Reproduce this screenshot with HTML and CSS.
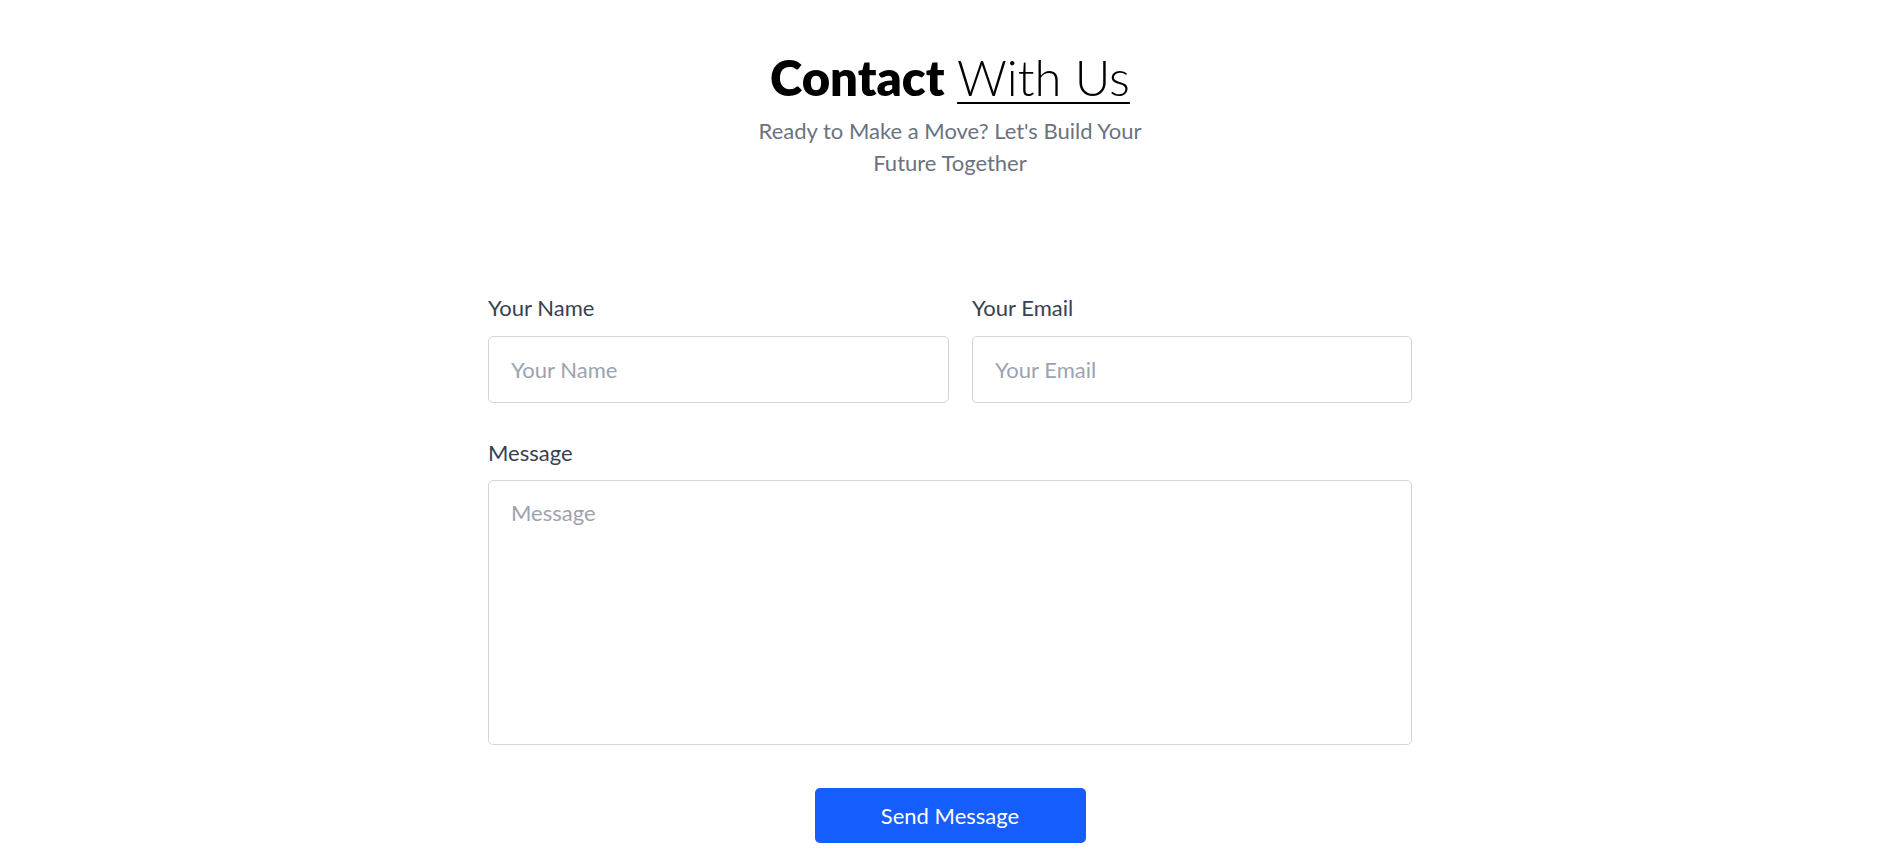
FILE: index.html
```html
<!DOCTYPE html>
<html lang="en">
<head>
<meta charset="utf-8">
<title>Contact With Us</title>
<link rel="stylesheet" href="styles.css">
</head>
<body>
<section class="contact">
  <header class="contact-head">
    <h1 class="title"><span class="title-bold">Contact</span> <span class="title-light">With Us</span></h1>
    <p class="subtitle">Ready to Make a Move? Let's Build Your Future Together</p>
  </header>
  <form class="form">
    <div class="row">
      <div class="field">
        <label class="label" for="name">Your Name</label>
        <input class="input" id="name" type="text" placeholder="Your Name">
      </div>
      <div class="field">
        <label class="label" for="email">Your Email</label>
        <input class="input" id="email" type="email" placeholder="Your Email">
      </div>
    </div>
    <div class="field field-msg">
      <label class="label" for="msg">Message</label>
      <textarea class="input textarea" id="msg" placeholder="Message"></textarea>
    </div>
    <div class="actions">
      <button class="btn" type="button">Send Message</button>
    </div>
  </form>
</section>
</body>
</html>
```
FILE: styles.css
```css
* { box-sizing: border-box; }
html, body { margin: 0; padding: 0; background: #fff; }
body {
  font-family: "Lato", "Inter", "Noto Sans", sans-serif;
  color: #111;
}
.contact {
  padding-top: 48px;
  display: flex;
  flex-direction: column;
  align-items: center;
}
.contact-head {
  text-align: center;
  display: flex;
  flex-direction: column;
  align-items: center;
}
.title {
  margin: 0;
  font-size: 49px;
  line-height: 58px;
  color: #000;
  font-weight: 400;
}
.title-bold { font-weight: 800; }
.title-light {
  font-weight: 300;
  text-decoration: underline;
  text-decoration-thickness: 1.5px;
  text-underline-offset: 6px;
}
.subtitle {
  margin: 9px 0 0;
  max-width: 420px;
  font-size: 22px;
  line-height: 32px;
  color: #6b7280;
}
.form {
  width: 924px;
  margin-top: 115px;
  display: flex;
  flex-direction: column;
}
.row {
  display: grid;
  grid-template-columns: 461fr 440fr;
  column-gap: 23px;
}
.field {
  display: flex;
  flex-direction: column;
}
.field-msg { margin-top: 36px; }
.label {
  font-size: 22px;
  line-height: 28px;
  color: #374151;
  margin-bottom: 14px;
}
.field-msg .label { margin-bottom: 13px; }
.input {
  height: 67px;
  width: 100%;
  border: 1px solid #d1d5db;
  border-radius: 5px;
  padding: 0 22px;
  font-family: inherit;
  font-size: 22px;
  color: #111;
  background: #fff;
  outline: none;
}
.input::placeholder { color: #9ca3af; }
.textarea {
  height: 265px;
  padding: 18px 22px;
  line-height: 28px;
  resize: none;
  display: block;
}
.actions {
  margin-top: 43px;
  display: flex;
  justify-content: center;
}
.btn {
  width: 271px;
  height: 55px;
  border: 0;
  border-radius: 5px;
  background: #155dfc;
  color: #fff;
  font-family: inherit;
  font-size: 22px;
  cursor: pointer;
}
```
